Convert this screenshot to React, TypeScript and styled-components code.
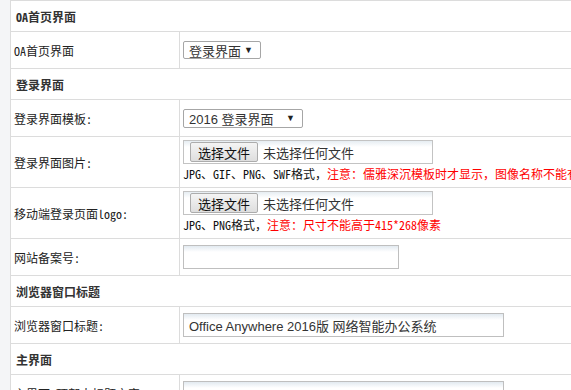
import styled, { createGlobalStyle } from "styled-components";

const GlobalStyle = createGlobalStyle`
  html, body {
    margin: 0;
    overflow: hidden;
    background: #f4f5f7;
  }
`;

const SONG = `"Noto Sans Mono CJK SC", "Noto Sans CJK SC", monospace`;
const UI = `"Liberation Sans", Arial, "Noto Sans CJK SC", sans-serif`;

const Page = styled.div`
  padding-left: 10px;
`;

const Table = styled.div`
  width: 820px;
  background: #fff;
  border-top: 1px solid #dcdcdc;
  border-left: 1px solid #dcdcdc;
  font-family: ${SONG};
  font-size: 12px;
  color: #222;
`;

const SectionRow = styled.div`
  box-sizing: border-box;
  height: 31px;
  display: flex;
  align-items: center;
  padding-left: 5px;
  border-bottom: 1px solid #dcdcdc;
  font-weight: bold;
  color: #333;
`;

const Row = styled.div<{ $h?: number }>`
  box-sizing: border-box;
  height: ${({ $h }) => $h ?? 37}px;
  display: flex;
  border-bottom: 1px solid #dcdcdc;
`;

const Label = styled.div`
  box-sizing: border-box;
  width: 169px;
  flex: none;
  display: flex;
  align-items: center;
  padding-left: 3px;
  border-right: 1px solid #dcdcdc;
`;

const Value = styled.div<{ $top?: boolean }>`
  flex: 1;
  display: flex;
  flex-direction: column;
  align-items: flex-start;
  justify-content: ${({ $top }) => ($top ? "flex-start" : "center")};
  padding: ${({ $top }) => ($top ? "3px" : "0")} 0 0 3px;
`;

const SelectBox = styled.div<{ $w: number }>`
  box-sizing: border-box;
  width: ${({ $w }) => $w}px;
  height: ${({ $w }) => ($w > 100 ? 19 : 18)}px;
  display: flex;
  align-items: center;
  justify-content: space-between;
  padding: 0 7px 0 5px;
  border: 1px solid #a6a6a6;
  border-radius: 2px;
  background: #fff;
  font-family: ${UI};
  font-size: 13px;
  color: #333;
`;

const Arrow = styled.span`
  font-size: 9px;
  color: #222;
`;

const TextInput = styled.div<{ $w: number }>`
  box-sizing: border-box;
  width: ${({ $w }) => $w}px;
  height: 24px;
  display: flex;
  align-items: center;
  padding-left: 5px;
  border: 1px solid #bfbfbf;
  background: linear-gradient(#e2eaf0 0, #fff 6px);
  font-family: ${UI};
  font-size: 13px;
  color: #333;
`;

const FileBox = styled.div`
  box-sizing: border-box;
  width: 250px;
  height: 24px;
  display: flex;
  align-items: center;
  gap: 5px;
  padding-left: 6px;
  border: 1px solid #c3c3c3;
  background: linear-gradient(#e6edf2 0, #fff 6px);
  font-family: ${UI};
  font-size: 13px;
  color: #333;
`;

const FileButton = styled.div`
  box-sizing: border-box;
  width: 68px;
  height: 20px;
  display: flex;
  align-items: center;
  justify-content: center;
  border: 1px solid #acacac;
  border-radius: 2px;
  background: linear-gradient(#f4f4f4, #dedede);
  color: #111;
`;

const Hint = styled.div`
  margin-top: 2px;
  line-height: 16px;
  white-space: nowrap;
  color: #111;
`;

const Warn = styled.span`
  color: #f00;
`;

const FilePicker = () => (
  <FileBox>
    <FileButton>选择文件</FileButton>
    <span>未选择任何文件</span>
  </FileBox>
);

export default function App() {
  return (
    <>
      <GlobalStyle />
      <Page>
        <Table>
          <SectionRow>OA首页界面</SectionRow>
          <Row>
            <Label>OA首页界面</Label>
            <Value>
              <SelectBox $w={78}>
                <span>登录界面</span>
                <Arrow>▼</Arrow>
              </SelectBox>
            </Value>
          </Row>

          <SectionRow>登录界面</SectionRow>
          <Row>
            <Label>登录界面模板:</Label>
            <Value>
              <SelectBox $w={120}>
                <span>2016 登录界面</span>
                <Arrow>▼</Arrow>
              </SelectBox>
            </Value>
          </Row>
          <Row $h={51}>
            <Label>登录界面图片:</Label>
            <Value $top>
              <FilePicker />
              <Hint>
                JPG、GIF、PNG、SWF格式，
                <Warn>注意：儒雅深沉模板时才显示，图像名称不能有中文</Warn>
              </Hint>
            </Value>
          </Row>
          <Row $h={51}>
            <Label>移动端登录页面logo:</Label>
            <Value $top>
              <FilePicker />
              <Hint>
                JPG、PNG格式，<Warn>注意：尺寸不能高于415*268像素</Warn>
              </Hint>
            </Value>
          </Row>
          <Row>
            <Label>网站备案号:</Label>
            <Value>
              <TextInput $w={216} />
            </Value>
          </Row>

          <SectionRow>浏览器窗口标题</SectionRow>
          <Row>
            <Label>浏览器窗口标题:</Label>
            <Value>
              <TextInput $w={321}>Office Anywhere 2016版 网络智能办公系统</TextInput>
            </Value>
          </Row>

          <SectionRow>主界面</SectionRow>
          <Row>
            <Label>主界面-顶部大标题文字:</Label>
            <Value>
              <TextInput $w={321} />
            </Value>
          </Row>
        </Table>
      </Page>
    </>
  );
}
